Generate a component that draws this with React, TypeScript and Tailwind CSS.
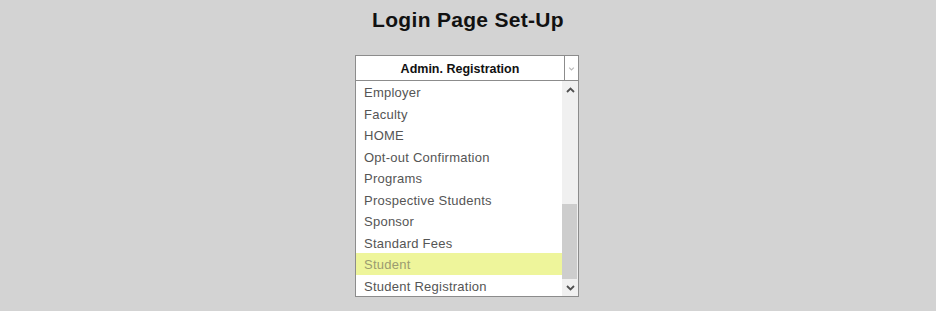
const OPTIONS = [
  "Employer",
  "Faculty",
  "HOME",
  "Opt-out Confirmation",
  "Programs",
  "Prospective Students",
  "Sponsor",
  "Standard Fees",
  "Student",
  "Student Registration",
];

const SELECTED = "Student";

const Chevron = ({ up, className }: { up?: boolean; className?: string }) => (
  <svg width="9" height="6" viewBox="0 0 9 6" className={className}>
    <path
      d={up ? "M1 5 L4.5 1.5 L8 5" : "M1 1 L4.5 4.5 L8 1"}
      fill="none"
      stroke="currentColor"
      strokeWidth="1.8"
    />
  </svg>
);

const App = () => {
  return (
    <div className="flex min-h-[311px] flex-col items-center bg-[#d3d3d3] font-['Liberation_Sans',Arial,sans-serif]">
      <h1 className="mt-[7px] text-[21px] font-bold leading-[26px] tracking-[0.3px] text-[#111]">
        Login Page Set-Up
      </h1>

      <div className="-ml-[2px] mt-[22px] w-[224px] border border-[#8c8c8c] bg-white">
        <div className="flex h-[25px] border-b border-[#8c8c8c]">
          <div className="flex flex-1 items-center justify-center pt-[3px] text-[12.5px] font-bold text-[#111]">
            Admin. Registration
          </div>
          <div className="flex w-[14px] items-center justify-center border-l border-[#8c8c8c] pt-[2px] text-[#bbb]">
            <Chevron className="h-[4px] w-[7px]" />
          </div>
        </div>

        <div className="flex h-[215px]">
          <ul className="flex-1">
            {OPTIONS.map((o) => (
              <li
                key={o}
                className={`flex h-[21.5px] items-center pl-[8px] pt-[2px] text-[13px] tracking-[0.25px] ${
                  o === SELECTED ? "bg-[#eef59b] text-[#9b9b70]" : "text-[#555]"
                }`}
              >
                {o}
              </li>
            ))}
          </ul>
          <div className="flex w-[16px] flex-col bg-[#f0f0f0]">
            <div className="flex h-[17px] items-center justify-center text-[#505050]">
              <Chevron up />
            </div>
            <div className="flex-1" />
            <div className="mr-[1px] h-[75px] bg-[#cdcdcd]" />
            <div className="flex h-[17px] items-center justify-center text-[#505050]">
              <Chevron />
            </div>
          </div>
        </div>
      </div>
    </div>
  );
};

export default App;
